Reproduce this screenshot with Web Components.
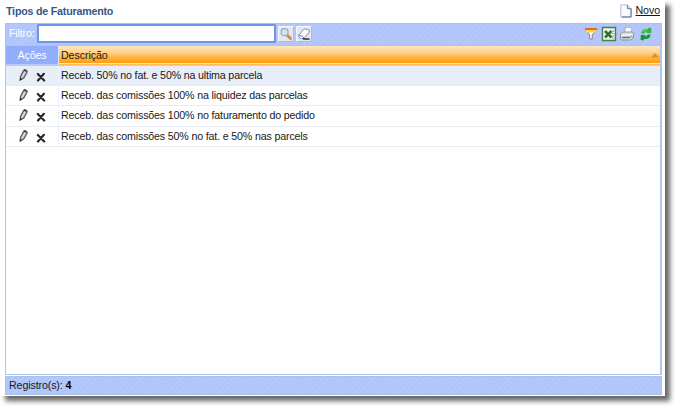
<!DOCTYPE html>
<html lang="pt-BR"><head><meta charset="utf-8"><title>Tipos de Faturamento</title>
<style>
html,body{margin:0;width:676px;height:407px;overflow:hidden;background:#fff;font:10.67px/14px "Liberation Sans",Arial,sans-serif;color:#181818}
</style></head><body>
<billing-window></billing-window>
<script>
const define=(name,html)=>customElements.define(name,class extends HTMLElement{
 constructor(){super();this.attachShadow({mode:'open'}).innerHTML='<style>*{box-sizing:border-box}svg{display:block}</style>'+html;}
});
const icons={
page:['0 0 14 16','<path d="M2 2h7l4 4v9H2z" fill="#f8faff" stroke="#a9bbd3"/><path d="M9 2v4h4" fill="#cbd9ed" stroke="#5e7493"/><path d="M13 6v9H3" fill="none" stroke="#49658e"/>'],
search:['0 0 16 16','<path d="M.5 .5h15v15H.5z" fill="#e6e6ef"/><path d="M.5 15.500V.5h15" fill="none" stroke="#f8f8fc"/><path d="M.5 15.500h15V.5" fill="none" stroke="#b9b5d2"/><path d="M9.500 9.500l3 3" stroke="#c9904c" stroke-width="3" stroke-linecap="round"/><circle cx="6.600" cy="6.200" r="3.500" fill="#cfe6f3" stroke="#9caabc" stroke-width="1.200"/>'],
eraser:['0 0 16 16','<path d="M.5 .5h15v15H.5z" fill="#e6e6ef"/><path d="M.5 15.500V.5h15" fill="none" stroke="#f8f8fc"/><path d="M.5 15.500h15V.5" fill="none" stroke="#b9b5d2"/><path d="M2.500 9.500l5-6q1-1 2.500-.5l3 1q1 1 0 2.500l-5 6H4.500q-2-1-2-3z" fill="#f7faff" stroke="#7f91b5"/><path d="M3 9.500q4 0 5 2.500" fill="none" stroke="#6f87b0"/><path d="M7 13h6.500" stroke="#222b3b" stroke-width="1.500"/>'],
filter:['0 0 14 14','<path d="M1.500 2.500h11L8.300 8v4H5.700V8z" fill="#f5f7fa" stroke="#8b8790"/><path d="M1 2h12" stroke="#ee6423" stroke-width="2"/><path d="M2 4.200h10" stroke="#ffda43" stroke-width="2.400"/>'],
excel:['0 0 16 16','<path d="M1.500 1.500h13v13h-13z" fill="#f0f6ec" stroke="#478044" stroke-width="1.400"/><path d="M11 5h2.500M11 7.500h2.500M11 10h2.500M11 12h2.500" stroke="#88ae84"/><path d="M4 5l6.500 6.500M10.500 5L4 11.500" stroke="#2e7335" stroke-width="2.600"/>'],
print:['0 0 16 16','<path d="M5 7l2-6 6 1-1 6z" fill="#f8fbff" stroke="#a7b3c6"/><path d="M1.500 8l3-2h9l1 2v4l-3 2h-9l-1-1z" fill="#d5dbe3" stroke="#8b95a2"/><path d="M2 9h9l3-1" fill="none" stroke="#fff"/><path d="M3 11.500h8" stroke="#6c7683" stroke-width="1.500"/><path d="M11.500 10.500h2" stroke="#63bd4b" stroke-width="1.500"/>'],
refresh:['0 0 14 14','<path d="M2.500 6.500Q2.500 2 7.500 2h1.300L10 .5 12.300 1v5H7.200L8.700 4.500Q6 4.500 5 6.500z" fill="#2cb83a"/><path d="M11.500 7.500Q11.500 12 6.500 12H5.200L4 13.500 1.700 13V8h5.100L5.300 9.500Q8 9.500 9 7.500z" fill="#169928"/><path d="M4 5q1-2 4-2" fill="none" stroke="#86db71"/>'],
pencil:['0 0 12 14','<path d="M2.200 12.500l.5-3.900L6.200 2q1-1.300 2.600-.5t1.200 2.200L6.300 10.300z" fill="#b8b8b8" stroke="#555" stroke-width="1.200"/><path d="M7.500 4l-3 5.500" stroke="#f6f6f6"/><path d="M2.200 13.200l.3-3 2 1.500z" fill="#222"/><path d="M6.500 1.700l3 1.500" stroke="#444" stroke-width="1.300"/>'],
cross:['0 0 10 10','<path d="M1.800 2l6.400 6.500M7.900 1.800L2 8.500" stroke="#292929" stroke-width="2.200" stroke-linecap="round"/>']
};
customElements.define('ui-icon',class extends HTMLElement{constructor(){super();const s=this.attachShadow({mode:'open'}),[v,p]=icons[this.getAttribute('name')];s.innerHTML=`<style>:host{display:block;flex:none;width:16px;height:16px}svg{display:block;width:100%;height:100%}</style><svg viewBox="${v}">${p}</svg>`;}});
define('title-bar',`<style>:host{display:flex;height:23px;padding:4px 2px 0 1px;justify-content:space-between}b{color:#365687;line-height:14px;letter-spacing:-.2px}.new{display:flex;gap:4px}.new ui-icon{width:13px;height:15px;margin-top:-1px}u{line-height:13px;text-underline-offset:1px;letter-spacing:-.1px}</style><b><slot></slot></b><div class="new"><ui-icon name="page"></ui-icon><u>Novo</u></div>`);
define('filter-bar',`<style>:host{display:flex;height:22px;border:1px solid #a8c3e5;border-bottom:0;padding:0 8px 2px 3px;align-items:center;background:repeating-linear-gradient(135deg,#b5c8fd 0 2px,#b0c4f9 2px 4px);box-sizing:border-box}label{color:#fff;width:28px;margin-top:-2px;letter-spacing:-.15px}input{width:239px;height:19px;border:2px solid #6c94ea;border-radius:1px;background:#fff;outline:0;padding:0;margin-right:2px}.mid{display:flex;gap:2px}.right{display:flex;gap:2px;margin-left:auto;align-items:center}.f,.r{width:14px;height:14px}.f{margin-right:1px}.r{margin-left:2px}</style><label>Filtro:</label><input aria-label="Filtro"><div class="mid"><ui-icon name="search"></ui-icon><ui-icon name="eraser"></ui-icon></div><div class="right"><ui-icon class="f" name="filter"></ui-icon><ui-icon name="excel"></ui-icon><ui-icon name="print"></ui-icon><ui-icon class="r" name="refresh"></ui-icon></div>`);
define('table-row',`<style>:host{display:flex;box-sizing:border-box;height:20.200px;border-bottom:1px solid #e6ebf4;letter-spacing:-.16px}:host([selected]){background:#e8eef7}.act{width:53px;padding:2px 0 0 12px;display:flex;gap:7px;border-right:1px solid #edf1f8}.act ui-icon{width:11px;height:14px}.act .x{width:10px;height:10px;margin-top:4px}.desc{padding:2px 0 0 2px;line-height:14px;white-space:nowrap}</style><div class="act"><ui-icon name="pencil"></ui-icon><ui-icon class="x" name="cross"></ui-icon></div><div class="desc"><slot></slot></div>`);
define('table-head',`<style>:host{display:flex;height:20px;line-height:19px;letter-spacing:-.08px}.a{width:53px;background:#91adfc;color:#fff;text-align:center;border-right:1px solid #dce6fa;border-bottom:2px solid #b7caf9}.d{flex:1;padding-left:2px;background:linear-gradient(#ffe6bd 0,#ffd391 6px,#ffb54a 11px,#ff9b0c 17px,#ffe7b9 17px,#ffe7b9 18px,#ffb950 18px,#ffcb7b 20px);display:flex;justify-content:space-between}svg{margin:6px 1px 0}</style><div class="a">Ações</div><div class="d"><span>Descrição</span><svg width="8" height="6"><path d="M0 5.500L4 1l4 4.500z" fill="#d89224"/></svg></div>`);
define('data-grid',`<style>:host{display:block;box-sizing:border-box;height:330px;border:1px solid #afc7e4;border-right-width:2px;background:#fff}</style><table-head></table-head><slot></slot>`);
define('status-bar',`<style>:host{display:block;box-sizing:border-box;height:19px;margin-top:1px;border:1px solid #a8c4e5;background:repeating-linear-gradient(135deg,#b5c8fd 0 2px,#b0c4f9 2px 4px);padding:1px 3px;line-height:14px;letter-spacing:-.12px}b{color:#000}</style>Registro(s): <b><slot></slot></b>`);
define('billing-window',`<style>:host{display:block;box-sizing:border-box;width:665px;height:396px;padding:0 3px 0 5px;background:#fff;box-shadow:5px 5px 5px 0 #666}</style><title-bar>Tipos de Faturamento</title-bar><filter-bar></filter-bar><data-grid><table-row selected>Receb. 50% no fat. e 50% na ultima parcela</table-row><table-row>Receb. das comissões 100% na liquidez das parcelas</table-row><table-row>Receb. das comissões 100% no faturamento do pedido</table-row><table-row>Receb. das comissões 50% no fat. e 50% nas parcels</table-row></data-grid><status-bar>4</status-bar>`);
</script></body></html>
